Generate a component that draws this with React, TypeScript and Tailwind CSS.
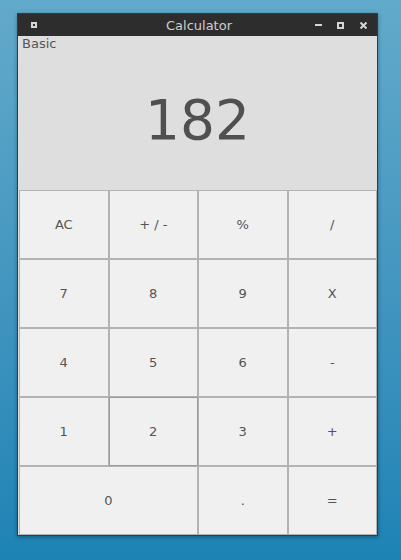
import React from "react";

const font = { fontFamily: '"DejaVu Sans", "Liberation Sans", sans-serif' };

type Key = { label: string; span?: boolean; focused?: boolean };

const keys: Key[] = [
  { label: "AC" },
  { label: "+ / -" },
  { label: "%" },
  { label: "/" },
  { label: "7" },
  { label: "8" },
  { label: "9" },
  { label: "X" },
  { label: "4" },
  { label: "5" },
  { label: "6" },
  { label: "-" },
  { label: "1" },
  { label: "2", focused: true },
  { label: "3" },
  { label: "+" },
  { label: "0", span: true },
  { label: "." },
  { label: "=" },
];

const TitleBar = () => (
  <div className="flex h-[22px] items-center bg-[#2d2d2d] pl-[13px] pr-[10px] text-[#cfcfcf]">
    <div className="flex w-[60px] items-center">
      <div className="flex h-[6px] w-[6px] items-center justify-center bg-[#d6d6d6]">
        <div className="h-[2px] w-[2px] bg-[#2d2d2d]" />
      </div>
    </div>
    <div className="flex-1 text-center text-[13px] leading-none">Calculator</div>
    <div className="flex w-[60px] items-center justify-end">
      <div className="h-[2px] w-[7px] bg-[#d6d6d6]" />
      <div className="ml-[15px] flex h-[7px] w-[7px] items-center justify-center bg-[#d6d6d6]">
        <div className="h-[3px] w-[3px] bg-[#2d2d2d]" />
      </div>
      <svg className="ml-[16px]" width="7" height="7" viewBox="0 0 7 7">
        <path d="M0.5 0.5 L6.5 6.5 M6.5 0.5 L0.5 6.5" stroke="#d6d6d6" strokeWidth="2" />
      </svg>
    </div>
  </div>
);

export default function App() {
  return (
    <div
      className="h-[560px] w-[401px] bg-gradient-to-b from-[#62aacb] to-[#1c83b5] pl-[17px] pt-[13px]"
      style={font}
    >
      <div className="flex h-[523px] w-[361px] flex-col border border-[#3a3a3a] bg-[#dedede] shadow-[0_1px_4px_rgba(0,0,0,0.35)]">
        <TitleBar />
        <div className="flex h-[154px] flex-col">
          <div className="px-[4px] text-[13px] leading-[15px] text-[#555]">Basic</div>
          <div className="flex flex-1 items-center justify-center pb-[1px] text-[55px] leading-none text-[#505050]">
            182
          </div>
        </div>
        <div className="ml-[1px] grid flex-1 grid-cols-4 grid-rows-5">
          {keys.map((k) => (
            <div
              key={k.label}
              className={
                "flex items-center justify-center bg-[#f0f0f0] text-[13px] text-[#555] " +
                (k.span ? "col-span-2 " : "") +
                (k.focused ? "border border-[#9a9a9a]" : "border border-[#b3b3b3]")
              }
            >
              {k.label}
            </div>
          ))}
        </div>
      </div>
    </div>
  );
}
